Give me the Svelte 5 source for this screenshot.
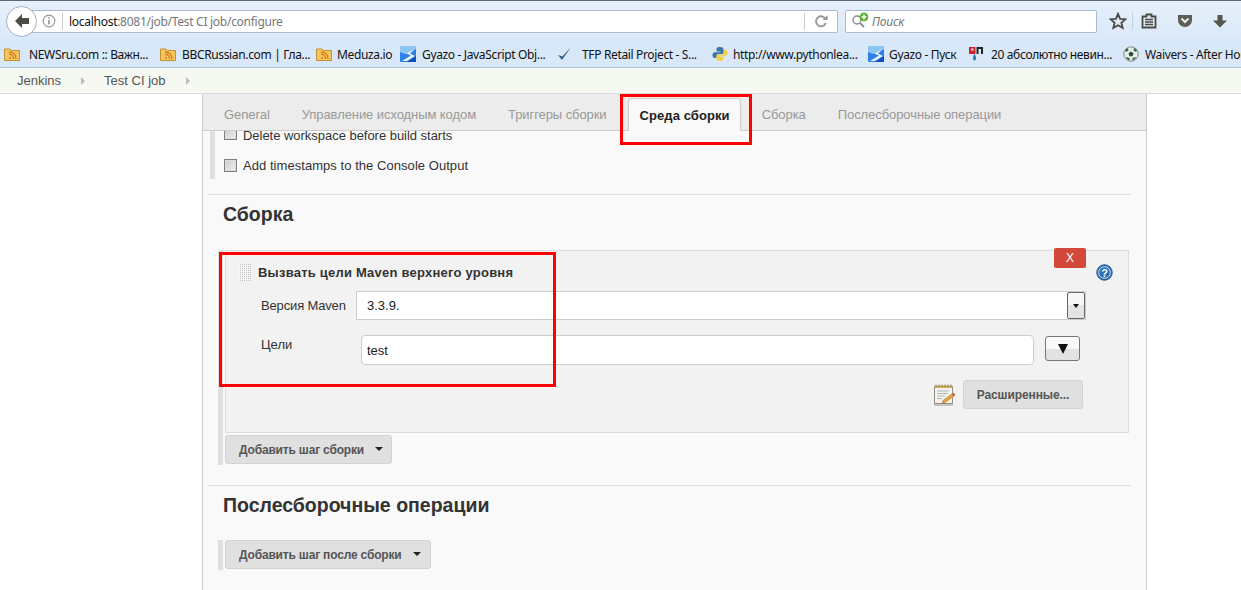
<script>
const tabs = ['General', 'Управление исходным кодом', 'Триггеры сборки', 'Среда сборки', 'Сборка', 'Послесборочные операции'];
const activeTab = 'Среда сборки';

const bookmarks = [
	{ icon: 'rss', label: 'NEWSru.com :: Важн...', width: 156, gap: 9 },
	{ icon: 'rss', label: 'BBCRussian.com | Гла...', width: 156, gap: 6 },
	{ icon: 'rss', label: 'Meduza.io', width: 84, gap: 5 },
	{ icon: 'gyazo', label: 'Gyazo - JavaScript Obj...', width: 157, gap: 6 },
	{ icon: 'check', label: 'TFP Retail Project - S...', width: 155, gap: 9 },
	{ icon: 'python', label: 'http://www.pythonlea...', width: 156, gap: 5 },
	{ icon: 'gyazo', label: 'Gyazo - Пуск', width: 100, gap: 5 },
	{ icon: 'yap', label: '20 абсолютно невин...', width: 155, gap: 7 },
	{ icon: 'ball', label: 'Waivers - After Hours', width: 140, gap: 6 }
];
</script>

<div class="page">
	<div class="toolbar">
		<div class="back">
			<svg width="16" height="16" viewBox="0 0 16 16"><path d="M8 1 L1 8 L8 15 L8 11 L15 11 L15 5 L8 5 Z" fill="#4c4c44" /></svg>
		</div>
		<div class="urlbar">
			<svg class="info" width="14" height="14" viewBox="0 0 14 14"><circle cx="7" cy="7" r="5.8" fill="none" stroke="#999" stroke-width="1.2" /><rect x="6.3" y="6" width="1.5" height="4.4" fill="#888" /><rect x="6.3" y="3.4" width="1.5" height="1.5" fill="#888" /></svg>
			<span class="sep url-sep"></span>
			<div class="url"><b>localhost</b>:8081/job/Test CI job/configure</div>
			<span class="sep reload-sep"></span>
			<svg class="reload" width="14" height="14" viewBox="0 0 14 14"><path d="M11.6 5.2 A5 5 0 1 0 11.8 9" fill="none" stroke="#9a9a9a" stroke-width="2" /><path d="M8.4 6 L13.6 6 L13.6 1 Z" fill="#9a9a9a" /></svg>
		</div>
		<div class="search">
			<svg width="20" height="18" viewBox="0 0 20 18"><circle cx="6" cy="8" r="4" fill="none" stroke="#8a8a8a" stroke-width="1.4" /><path d="M9 11 L13 15" stroke="#8a8a8a" stroke-width="1.8" /><circle cx="13" cy="5" r="4.4" fill="#5cb531" /><path d="M13 2.6 V7.4 M10.6 5 H15.4" stroke="#fff" stroke-width="1.5" /></svg>
			<span>Поиск</span>
		</div>
		<div class="tools">
			<svg width="18" height="18" viewBox="0 0 18 18"><path d="M9 1.8 L11.1 6.8 L16.5 7.2 L12.4 10.7 L13.7 16 L9 13.2 L4.3 16 L5.6 10.7 L1.5 7.2 L6.9 6.8 Z" fill="none" stroke="#4a4a42" stroke-width="1.8" /></svg>
			<span class="tool-sep"></span>
			<svg class="list" width="16" height="16" viewBox="0 0 16 16"><path d="M1.5 3.5 H5.5 V1.5 H10.5 V3.5 H14.5 V14.5 H1.5 Z" fill="none" stroke="#4a4a42" stroke-width="1.8" /><path d="M4 6.5 H12 M4 9 H12 M4 11.5 H12" stroke="#4a4a42" stroke-width="1.3" /></svg>
			<svg class="pocket" width="16" height="14" viewBox="0 0 16 14"><path d="M1 1 H15 V6 A7 7 0 0 1 1 6 Z" fill="#5e5e52" /><path d="M4.5 4.5 L8 8 L11.5 4.5" fill="none" stroke="#e6eef7" stroke-width="2" /></svg>
			<svg class="down" width="14" height="14" viewBox="0 0 14 14"><path d="M4.5 1 H9.5 V6.5 H14 L7 13.5 L0 6.5 H4.5 Z" fill="#57574d" /></svg>
		</div>
	</div>

	<div class="bookmarks">
		{#each bookmarks as b}
			<div class="bookmark" style="width: {b.width}px; gap: {b.gap}px">
				<svg width="16" height="16" viewBox="0 0 16 16">
					{#if b.icon === 'rss'}
						<path d="M0.5 3 H6 L7.5 4.5 H15.5 V14.5 H0.5 Z" fill="#f3c75f" stroke="#c29232" />
						<circle cx="6" cy="12" r="1.1" fill="#d9771a" />
						<path d="M5 8.5 A4 4 0 0 1 9.5 13 M5 6 A6.5 6.5 0 0 1 12 13" fill="none" stroke="#d9771a" stroke-width="1.3" />
					{:else if b.icon === 'gyazo'}
						<rect x="0" y="0" width="16" height="16" rx="1" fill="#2f80e6" />
						<path d="M0 0 H16 V3 L5 8 L0 6 Z" fill="#8cc4f2" />
						<path d="M15 3 L6 7.5 L11 9.5 L2 15 L7 15 L15 10 L10 7.5 Z" fill="#eaf4fd" />
						<path d="M7 16 L16 10 V16 Z" fill="#0f4fc0" />
					{:else if b.icon === 'check'}
						<path d="M1 9 L5 14 L14 1 L5.5 10.5 Z" fill="#35597f" />
					{:else if b.icon === 'python'}
						<path d="M8 1 C4.5 1 4.5 2.5 4.5 4 V5.5 H8.5 V6.3 H3 C1 6.3 0.5 8 0.5 9.5 C0.5 11 1.3 12 3 12 H4.5 V10 C4.5 8.7 5.5 8 6.7 8 H10 C11 8 11.5 7.3 11.5 6.3 V3 C11.5 1.7 10 1 8 1 Z" fill="#3a74a8" />
						<path d="M8 15 C11.5 15 11.5 13.5 11.5 12 V10.5 H7.5 V9.7 H13 C15 9.7 15.5 8 15.5 6.5 C15.5 5 14.7 4 13 4 H12 V6.3 C12 7.5 11 8.4 9.8 8.4 H6 C5 8.4 4.5 9 4.5 10 V13 C4.5 14.3 6 15 8 15 Z" fill="#f4ce45" />
					{:else if b.icon === 'yap'}
						<rect x="1" y="1" width="6.5" height="7" fill="#d5202a" />
						<rect x="8.5" y="1" width="6.5" height="7" fill="#222" />
						<rect x="3" y="2.5" width="2.5" height="2" fill="#d9e8f8" />
						<rect x="10.5" y="3" width="2.5" height="5" fill="#d9e8f8" />
						<path d="M6.5 8 C8.5 11 8.5 14 6.5 14.5 C4.5 14 4.5 11 6.5 8 Z" fill="#2c78b0" />
					{:else}
						<circle cx="8" cy="8" r="7.2" fill="#e8ece6" stroke="#7d8a80" />
						<path d="M8 5.5 L10.5 7.3 L9.5 10.2 H6.5 L5.5 7.3 Z" fill="#2d4a38" />
						<path d="M2 4 L5 2 L5.5 4.5 L3 6 Z M14 4 L11 2 L10.5 4.5 L13 6 Z M3 12 L6 14.5 L7 12.5 L4 11 Z M13 12 L10 14.5 L9 12.5 L12 11 Z" fill="#39664a" />
					{/if}
				</svg>
				<span>{b.label}</span>
			</div>
		{/each}
	</div>

	<div class="breadcrumbs">
		<span class="crumb">Jenkins</span>
		<span class="crumb-arrow first"></span>
		<span class="crumb">Test CI job</span>
		<span class="crumb-arrow"></span>
	</div>

	<main class="main">
		<div class="tabbar">
			{#each tabs as tab}
				<div class="tab" class:active={tab === activeTab}>{tab}</div>
			{/each}
		</div>

		<div class="content">
			<div class="options">
				<label class="option clipped"><span class="checkbox"></span>Delete workspace before build starts</label>
				<label class="option"><span class="checkbox"></span>Add timestamps to the Console Output</label>
			</div>

			<hr />
			<h2>Сборка</h2>

			<div class="steps">
				<div class="step">
					<div class="close">X</div>
					<div class="step-head">
						<span class="handle"></span>
						<span class="step-title">Вызвать цели Maven верхнего уровня</span>
						<svg class="help" width="17" height="17" viewBox="0 0 17 17"><circle cx="8.5" cy="8.5" r="7.7" fill="#2f6fb3" stroke="#1d4f8c" /><circle cx="8.5" cy="8.5" r="5.9" fill="none" stroke="#cfe0f2" stroke-width="1" /><text x="8.5" y="12.6" text-anchor="middle" class="help-mark">?</text></svg>
					</div>
					<div class="row select-row">
						<span class="field-label version-label">Версия Maven</span>
						<div class="select">
							<span>3.3.9.</span>
							<span class="select-btn"><i></i></span>
						</div>
					</div>
					<div class="row input-row">
						<span class="field-label goals-label">Цели</span>
						<input class="goals" value="test" readonly />
						<span class="expand"><i></i></span>
					</div>
					<div class="row advanced-row">
						<svg width="24" height="24" viewBox="0 0 24 24">
							<path d="M1.5 3.5 H19.5 V20.5 H1.5 Z" fill="#f6f4ea" stroke="#8f8f84" />
							<path d="M2 2.5 H19 V5 H2 Z" fill="#cdb25a" />
							<path d="M3 1.5 V4 M6 1.5 V4 M9 1.5 V4 M12 1.5 V4 M15 1.5 V4 M18 1.5 V4" stroke="#6f6a50" stroke-width="0.8" />
							<path d="M4 8 H16 M4 10.5 H15 M4 13 H12 M4 15.5 H9" stroke="#aab2b8" />
							<path d="M10 17.5 L19 11 L21 13 L12 19.5 L9.5 20 Z" fill="#e6a63c" stroke="#9a6a20" stroke-width="0.6" />
							<path d="M19 11 L20.5 10 L22.5 12 L21 13 Z" fill="#cf4b3a" />
							<rect x="1" y="21" width="19" height="2" fill="#c4c4c4" />
						</svg>
						<span class="btn advanced">Расширенные...</span>
					</div>
				</div>
				<div class="btn add-step">Добавить шаг сборки<i class="caret"></i></div>
			</div>

			<hr class="second" />
			<h2>Послесборочные операции</h2>

			<div class="steps post">
				<div class="btn add-post">Добавить шаг после сборки<i class="caret"></i></div>
			</div>
		</div>
	</main>

	<div class="mark mark-tab"></div>
	<div class="mark mark-step"></div>
</div>

<style>
	:global(body) { margin: 0; background: #fff; }
	.page { position: relative; height: 590px; overflow: hidden; font-family: "Liberation Sans", Arial, sans-serif; font-size: 13px; color: #333; }

	.toolbar { display: flex; align-items: center; height: 40px; border-top: 1px solid #5b6678; background: linear-gradient(#e6f0fa, #d9e8f8); padding-left: 6px; }
	.back { display: flex; align-items: center; justify-content: center; flex: none; z-index: 1; width: 31px; height: 31px; margin-right: -16px; border: 1px solid #a0b2c8; border-radius: 50%; background: #fff; box-sizing: border-box; }
	.urlbar { display: flex; align-items: center; width: 817px; height: 23px; padding-left: 21px; background: #fff; border: 1px solid #a9bbd0; border-left: none; border-radius: 0 2px 2px 0; box-sizing: border-box; }
	.info { flex: none; margin-right: 6px; }
	.sep { flex: none; width: 1px; height: 17px; background: #ccc; margin-right: 5px; }
	.url-sep { margin-right: 6px; }
	.url { flex: 1; font-family: "Noto Sans", sans-serif; font-size: 12px; color: #777; white-space: nowrap; letter-spacing: -0.28px; }
	.url b { font-weight: 400; color: #111; }
	.reload-sep { margin-right: 9px; }
	.reload { flex: none; margin-right: 9px; }
	.search { display: flex; align-items: center; gap: 1px; width: 252px; height: 23px; margin-left: 7px; padding-left: 5px; background: #fff; border: 1px solid #a9bbd0; border-radius: 2px; box-sizing: border-box; font-family: "Noto Sans", sans-serif; font-style: italic; font-size: 12px; letter-spacing: -0.2px; color: #777; }
	.tools { display: flex; align-items: center; margin-left: 12px; }
	.tool-sep { width: 1px; height: 16px; background: #c3cfdc; margin: 0 8px 0 5px; }
	.pocket { margin-left: 20px; }
	.down { margin-left: 20px; }

	.bookmarks { display: flex; align-items: center; height: 26px; padding-left: 4px; background: #d9e8f8; border-bottom: 1px solid #b4c4d6; overflow: hidden; white-space: nowrap; }
	.bookmark { display: flex; align-items: center; flex: none; font-family: "Noto Sans", sans-serif; font-size: 12px; color: #111; letter-spacing: -0.35px; }
	.bookmark svg { flex: none; }

	.breadcrumbs { display: flex; align-items: center; height: 25px; padding-left: 17px; background: #f6f9f2; border-bottom: 1px solid #ddd; color: #555; }
	.crumb-arrow { width: 0; height: 0; margin: 0 0 0 20px; border-left: 4px solid #bbb; border-top: 4px solid transparent; border-bottom: 4px solid transparent; }
	.crumb-arrow.first { margin-right: 19px; }

	.main { width: 945px; height: 497px; margin-left: 202px; background: #f9f9f9; border-left: 1px solid #ccc; border-right: 1px solid #ccc; box-sizing: border-box; overflow: hidden; }
	.tabbar { display: flex; align-items: flex-end; gap: 8px; height: 37px; padding-left: 9px; background: #ececec; border-bottom: 1px solid #ccc; box-sizing: border-box; }
	.tab { height: 32px; line-height: 33px; padding: 0 12px; color: #999; white-space: nowrap; letter-spacing: -0.075px; }
	.tab.active { height: 33px; margin: 0 1px -1px; background: #f9f9f9; border: 1px solid #ccc; border-bottom: none; border-radius: 4px 4px 0 0; padding: 0 10px 0 11px; font-weight: bold; color: #222; box-sizing: border-box; letter-spacing: 0.08px; }

	.content { padding-left: 5px; }
	.options { height: 48px; margin-left: 2px; padding-left: 9px; border-left: 5px solid #e0e0e0; }
	.option { display: flex; align-items: center; gap: 6px; height: 13px; margin-top: 16px; color: #333; letter-spacing: 0.05px; }
	.option.clipped { height: 12px; margin-top: 0; align-items: flex-end; overflow: hidden; letter-spacing: -0.03px; }
	.checkbox { flex: none; width: 11px; height: 11px; border: 1px solid #808080; background: linear-gradient(135deg, #c8c8c8, #f2f2f2); box-shadow: inset 0 0 0 1px #dcdcdc; }
	.clipped .checkbox { margin-bottom: 3px; }

	hr { width: 923px; height: 1px; margin: 15px 0 0; border: none; background: #ddd; }
	hr.second { margin-top: 20px; }
	h2 { margin: 0; padding-left: 15px; height: 38px; line-height: 38px; font-size: 19.5px; font-weight: bold; color: #333; }

	.steps { width: 911px; height: 215px; margin: 17px 0 0 10px; padding-left: 2px; border-left: 5px solid #e0e0e0; box-sizing: border-box; }
	.steps.post { height: 30px; margin-top: 16px; }
	.step { position: relative; height: 183px; padding-top: 13px; background: #f2f2f2; border: 1px solid #ddd; box-sizing: border-box; }
	.close { position: absolute; top: -3px; right: 42px; width: 32px; height: 20px; line-height: 20px; text-align: center; background: #d24939; border-radius: 2px; color: #fff; font-size: 12px; }
	.step-head { display: flex; align-items: center; height: 17px; padding: 0 15px 0 13px; }
	.handle { flex: none; width: 12px; height: 17px; margin-right: 7px; background: repeating-conic-gradient(#c4c4c4 0 25%, #f6f6f6 0 100%) 0 0 / 2px 2px; }
	.step-title { flex: 1; font-weight: bold; color: #333; letter-spacing: 0.23px; }
	.help-mark { font: bold 11px "Liberation Sans", sans-serif; fill: #fff; }

	.row { display: flex; align-items: center; margin-left: 35px; }
	.select-row { height: 29px; margin-top: 10px; }
	.input-row { height: 30px; margin-top: 15px; }
	.advanced-row { justify-content: flex-end; gap: 6px; height: 29px; margin-top: 15px; padding-right: 45px; }
	.field-label { flex: none; color: #333; }
	.version-label { width: 95px; letter-spacing: -0.15px; }
	.goals-label { width: 100px; margin-top: -12px; }
	.select { display: flex; align-items: center; justify-content: space-between; width: 730px; height: 29px; padding-left: 10px; background: #fff; border: 1px solid #ccc; box-sizing: border-box; color: #222; }
	.select-btn { display: flex; align-items: center; justify-content: center; width: 16px; height: 25px; border: 1px solid #666; border-radius: 2px; background: linear-gradient(#f7f7f7 50%, #e4e4e4 50%); }
	.select-btn i { border-top: 4px solid #111; border-left: 3.5px solid transparent; border-right: 3.5px solid transparent; }
	.goals { flex: none; width: 673px; height: 30px; padding: 0 5px; background: #fff; border: 1px solid #ccc; border-radius: 4px; box-sizing: border-box; font: 13px "Liberation Sans", sans-serif; color: #222; outline: none; }
	.expand { display: flex; align-items: center; justify-content: center; flex: none; width: 35px; height: 25px; margin: -3px 0 0 11px; border: 1px solid #777; border-radius: 3px; background: linear-gradient(#f9f9f9 50%, #e2e2e2 50%); box-sizing: border-box; }
	.expand i { border-top: 10px solid #111; border-left: 5px solid transparent; border-right: 5px solid transparent; }

	.btn { display: inline-flex; align-items: center; height: 29px; background: #e0e0e0; border: 1px solid #d2d2d2; border-radius: 3px; box-sizing: border-box; font-size: 12px; font-weight: bold; color: #555; white-space: nowrap; letter-spacing: -0.18px; }
	.advanced { justify-content: center; width: 120px; letter-spacing: -0.1px; }
	.add-step { width: 167px; margin-top: 2px; padding-left: 13px; }
	.add-post { width: 206px; padding-left: 13px; }
	.caret { margin-left: 11px; border-top: 4px solid #222; border-left: 4.5px solid transparent; border-right: 4.5px solid transparent; margin-top: -2px; }

	.mark { position: absolute; border: 3px solid #f00; box-sizing: border-box; pointer-events: none; }
	.mark-tab { left: 620px; top: 94px; width: 132px; height: 51px; }
	.mark-step { left: 219px; top: 252px; width: 337px; height: 135px; }
</style>
